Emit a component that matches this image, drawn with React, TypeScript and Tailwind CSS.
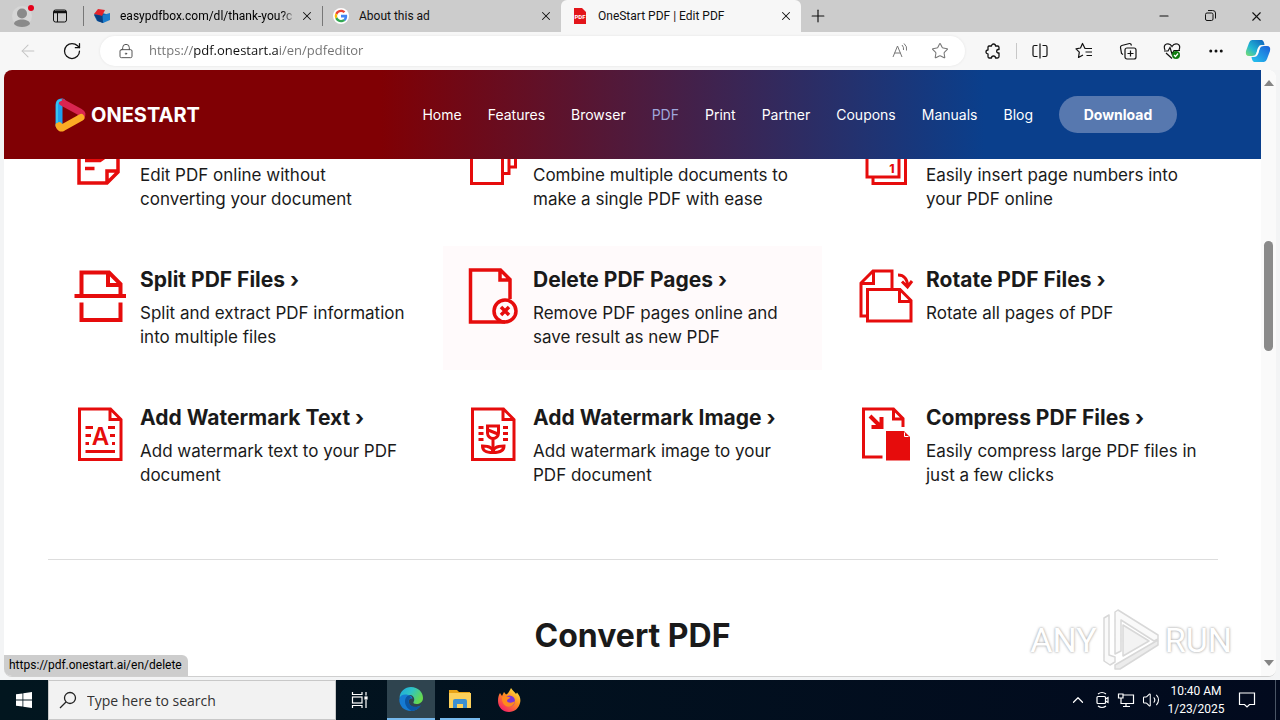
import type { ReactNode } from "react";
import {
  ArrowLeft,
  ChevronUp,
  Ellipsis,
  LockKeyhole,
  Minus,
  Plus,
  RotateCw,
  Star,
  Volume2,
  X,
} from "lucide-react";

interface Feature {
  title?: string;
  lines: string[];
  icon: ReactNode;
  active?: boolean;
}

const NAV_LINKS = ["Home", "Features", "Browser", "PDF", "Print", "Partner", "Coupons", "Manuals", "Blog"];

const FEATURES: Feature[] = [
  {
    title: "Split PDF Files ›",
    lines: ["Split and extract PDF information", "into multiple files"],
    icon: (
      <g strokeWidth="4">
        <path d="M9.5 28V4.5H37L48.5 16V28M36 4.5V17H48.5M2.5 28H54M9.5 34.5V52H48.5V34.5" />
      </g>
    ),
  },
  {
    title: "Delete PDF Pages ›",
    lines: ["Remove PDF pages online and", "save result as new PDF"],
    active: true,
    icon: (
      <g strokeWidth="3.5">
        <path d="M40 54H5.5V2H35.5L45 11.5V31M35 2V12H45" />
        <circle cx="40" cy="43" r="11" />
        <path d="M36 39L44 47M44 39L36 47" />
      </g>
    ),
  },
  {
    title: "Rotate PDF Files ›",
    lines: ["Rotate all pages of PDF"],
    icon: (
      <g strokeWidth="3">
        <path d="M9 48H3V15L15 3H34V20M15.5 3V15.5H3" />
        <path d="M9.5 21.5H42L53 32.5V53H9.5ZM41.5 21.5V33.5H53" />
        <path d="M40 7C46 7 49.5 11 49.5 18M44 13.5L49.5 19L54 13" />
      </g>
    ),
  },
  {
    title: "Add Watermark Text ›",
    lines: ["Add watermark text to your PDF", "document"],
    icon: (
      <g strokeWidth="3">
        <path d="M7.5 3H38.5L49 13.5V53.5H7.5ZM38 3V13.5H49" />
        <path d="M13.5 21.5H21M13.5 29.5H19M13.5 37.5H17M36 21.5H43M38 29.5H43M40 37.5H43M13.5 45.5H43" />
        <text x="28.5" y="39" textAnchor="middle" fontSize="24" fontWeight="600" fill="currentColor" stroke="none">
          A
        </text>
      </g>
    ),
  },
  {
    title: "Add Watermark Image ›",
    lines: ["Add watermark image to your", "PDF document"],
    icon: (
      <g strokeWidth="3">
        <path d="M7.5 3H38.5L49 13.5V53.5H7.5ZM38 3V13.5H49" />
        <path d="M13.5 21.5H18.5M13.5 27.5H18.5M13.5 33.5H18.5M38 21.5H43M38 27.5H43M38 33.5H43" />
        <path d="M22.5 20H33.5V27C33.5 30 31 32.5 28 32.5S22.5 30 22.5 27ZM23 24L33 28M28 32V46" />
        <path d="M28 46C28 42 25 40 17.5 40C17.5 44.5 20 46.5 28 46.5C36 46.5 39 44.5 39 40C31 40 28 42 28 46" />
      </g>
    ),
  },
  {
    title: "Compress PDF Files ›",
    lines: ["Easily compress large PDF files in", "just a few clicks"],
    icon: (
      <g strokeWidth="3">
        <path d="M24.5 51H5.5V3H35.5L45 12.5V21M35.5 3V13H45" />
        <path strokeWidth="4" d="M12 10L23 21M13.5 21H23.5V11" />
        <path fill="currentColor" stroke="none" d="M28 25H46L52 31V54.5H28Z" />
        <path stroke="white" strokeWidth="1" d="M46.5 26.5V30.5H50.5" />
      </g>
    ),
  },
];

// Row that is scrolled halfway beneath the sticky header
const SCROLLED_FEATURES: Feature[] = [
  {
    lines: ["Edit PDF online without", "converting your document"],
    icon: (
      <g strokeWidth="3.5">
        <path d="M7 20V53H35L46 42V20M35 53V41H46M13 30.5H28L33 27M13 38.5H22.5" />
      </g>
    ),
  },
  {
    lines: ["Combine multiple documents to", "make a single PDF with ease"],
    icon: (
      <g strokeWidth="3">
        <path d="M6.5 20V53.5H37.5V20M38 43.5H44V20M44 37H50.5V20" />
      </g>
    ),
  },
  {
    lines: ["Easily insert page numbers into", "your PDF online"],
    icon: (
      <g strokeWidth="3">
        <path d="M9 20V47H41V20M15 47V53.5H47.5V20" />
        <text x="34" y="43" textAnchor="middle" fontSize="12" fontWeight="800" fill="currentColor" stroke="none">
          1
        </text>
      </g>
    ),
  },
];

function FeatureText({ feature }: { feature: Feature }) {
  return (
    <div>
      {feature.title && (
        <h3 className="mb-[9px] text-[21px] leading-6 font-bold whitespace-nowrap">
          {feature.title}
        </h3>
      )}
      <p className="text-[17px] leading-6 whitespace-nowrap">
        {feature.lines.map((line) => (
          <span key={line} className="block">
            {line}
          </span>
        ))}
      </p>
    </div>
  );
}

function FeatureCard({ feature }: { feature: Feature }) {
  return (
    <a
      href="#feature"
      className={`mx-[7px] flex items-start gap-3 pt-[22px] pb-[21px] pl-[22px] ${
        feature.active ? "bg-[#fffafb]" : ""
      }`}
    >
      <svg viewBox="0 0 56 56" fill="none" stroke="currentColor" className="size-14 shrink-0 text-[#e60c0c]">
        {feature.icon}
      </svg>
      <FeatureText feature={feature} />
    </a>
  );
}

function ScrolledCard({ feature }: { feature: Feature }) {
  return (
    <a href="#feature" className="mx-[7px] flex items-start gap-3 pb-[21px] pl-[22px]">
      <svg viewBox="0 29 56 27" fill="none" stroke="currentColor" className="h-[27px] w-14 shrink-0 text-[#e60c0c]">
        {feature.icon}
      </svg>
      <div className="pt-1">
        <FeatureText feature={feature} />
      </div>
    </a>
  );
}

function TabBar() {
  return (
    <div className="flex h-8 shrink-0 items-center bg-[#cccccc] font-[Roboto] text-[12px]">
      <button aria-label="Profile" className="ml-3 shrink-0">
        <svg viewBox="0 0 24 24" className="size-6">
          <circle cx="10" cy="12" r="10" fill="#d6d6d6" />
          <circle cx="10" cy="9.5" r="5" fill="#8a8a8a" />
          <path d="M2 20C2 14 18 14 18 20C15 24 5 24 2 20Z" fill="#8a8a8a" />
          <circle cx="19" cy="4" r="3" fill="#e5001a" />
        </svg>
      </button>
      <button aria-label="Tab actions" className="ml-4 shrink-0">
        <svg viewBox="0 0 16 16" fill="none" stroke="#111" className="size-4">
          <rect x="1.5" y="2" width="13" height="12" rx="2" />
          <path d="M2 4H14" strokeWidth="2.5" />
          <path d="M5.5 4V14" />
        </svg>
      </button>
      <div className="ml-[15px] h-5 w-px shrink-0 bg-[#777]" />
      <div className="flex w-[238px] shrink-0 items-center pr-2 pl-[10px]">
        <svg viewBox="0 0 16 16" className="size-4 shrink-0">
          <path d="M0 7L8 5L16 7L9 15L3 13Z" fill="#0a5da8" />
          <path d="M9 7L16 5V12L9 15Z" fill="#1b7ccb" />
          <path d="M0 6L4 1L11 2L8 8Z" fill="#e5232b" />
          <path d="M0 6L8 8L9 15L4 13Z" fill="#0b3f80" />
        </svg>
        <span className="ml-[10px] flex-1 overflow-hidden bg-linear-to-r from-black from-92% to-transparent bg-clip-text whitespace-nowrap text-transparent">
          easypdfbox.com/dl/thank-you?c
        </span>
        <button aria-label="Close tab" className="ml-1">
          <X className="size-[14px]" strokeWidth={1.75} />
        </button>
      </div>
      <div className="h-5 w-px shrink-0 bg-[#777]" />
      <div className="flex w-[238px] shrink-0 items-center pr-2 pl-[10px]">
        <svg viewBox="0 0 48 48" className="size-4 shrink-0">
          <circle cx="24" cy="24" r="24" fill="white" />
          <path fill="#EA4335" d="M24 12c3.300 0 6 1.200 8 3l5-5C33.500 6.600 29 5 24 5 16.500 5 10 9.300 7 15.500l6 4.600C14.500 15.500 18.900 12 24 12z" />
          <path fill="#4285F4" d="M42.500 24.500c0-1.500-.1-2.700-.4-4H24v8h10.500c-.5 2.700-2 4.700-4 6.100l6 4.700c3.800-3.500 6-8.600 6-14.800z" />
          <path fill="#FBBC05" d="M13 28a12 12 0 0 1 0-7.900l-6-4.600a19 19 0 0 0 0 17.100z" />
          <path fill="#34A853" d="M24 43c5 0 9.500-1.600 12.500-4.500l-6-4.700c-1.700 1.200-3.900 1.900-6.500 1.900-5.100 0-9.500-3.300-11-7.800l-6 4.700C10 38.800 16.500 43 24 43z" />
        </svg>
        <span className="ml-[10px] flex-1">About this ad</span>
        <button aria-label="Close tab">
          <X className="size-[14px]" strokeWidth={1.75} />
        </button>
      </div>
      <div className="flex h-8 w-60 shrink-0 items-center rounded-t-md bg-[#f7f7f7] pr-2 pl-[11px]">
        <svg viewBox="0 0 16 16" className="size-4 shrink-0">
          <path d="M2 0H10L14 4V16H2Z" fill="#e3151a" />
          <text x="8" y="10.5" textAnchor="middle" fontSize="6" fontWeight="700" fill="white">
            PDF
          </text>
        </svg>
        <span className="ml-[10px] flex-1">OneStart PDF | Edit PDF</span>
        <button aria-label="Close tab">
          <X className="size-[14px]" strokeWidth={1.75} />
        </button>
      </div>
      <button aria-label="New tab" className="ml-[7px]">
        <Plus className="size-5" strokeWidth={1.4} />
      </button>
      <div className="mr-4 ml-auto flex items-center gap-8">
        <button aria-label="Minimize">
          <Minus className="size-[14px]" strokeWidth={1.75} />
        </button>
        <button aria-label="Restore">
          <svg viewBox="0 0 14 14" fill="none" stroke="#111" className="size-[14px]">
            <rect x="2.5" y="4" width="7.5" height="7.5" rx="1.5" />
            <path d="M5 1.500H9.500Q12.500 1.500 12.500 4V9.500" />
          </svg>
        </button>
        <button aria-label="Close window">
          <X className="size-[15px]" strokeWidth={1.75} />
        </button>
      </div>
    </div>
  );
}

function Toolbar() {
  return (
    <div className="flex h-[38px] shrink-0 items-center bg-[#f7f7f7] pr-[9px] pl-[18px]">
      <button aria-label="Back">
        <ArrowLeft className="size-5 text-[#c4c4c4]" strokeWidth={1.25} />
      </button>
      <button aria-label="Reload" className="ml-6">
        <RotateCw className="size-5" strokeWidth={1.5} />
      </button>
      <div className="ml-[18px] flex h-[30px] flex-1 items-center rounded-full bg-white pr-4 pl-[18px] shadow-[0_0_3px_rgba(0,0,0,0.08)]">
        <LockKeyhole className="size-4 text-[#555]" strokeWidth={1.5} />
        <input
          aria-label="Address"
          defaultValue="https://pdf.onestart.ai/en/pdfeditor"
          className="ml-[15px] min-w-0 flex-1 bg-linear-[90deg,#707070_45px,#111_45px,#111_130px,#707070_130px] bg-clip-text text-[13px] text-transparent outline-none"
        />
        <button aria-label="Read aloud">
          <svg viewBox="0 0 18 18" fill="none" stroke="#777" className="size-[18px]">
            <path d="M2 15L6.500 4L11 15M3.500 11H9.500M11 3Q13 5 12.500 8M13 1.500Q16.500 4.500 15.500 8.500" />
          </svg>
        </button>
        <button aria-label="Add to favorites" className="ml-[22px]">
          <Star className="size-[18px] text-[#777]" strokeWidth={1.4} />
        </button>
      </div>
      <div className="ml-[19px] flex items-center">
        <button aria-label="Extensions">
          <svg viewBox="0 0 18 18" fill="none" stroke="#111" strokeWidth="1.300" strokeLinejoin="round" className="size-[18px]">
            <path d="M5 4H7.500A2 2 0 0 1 11.500 4H13.500Q15 4 15 5.500V7.500H14A1.800 1.800 0 0 0 14 11H15V14.500Q15 16 13.500 16H11.500A2 2 0 0 0 7.500 16H5Q4 16 4 14.500V12A2 2 0 0 1 4 8V5.500Q4 4 5 4Z" />
          </svg>
        </button>
        <div className="mx-[14px] h-4 w-px bg-[#c8c8c8]" />
        <button aria-label="Split screen">
          <svg viewBox="0 0 18 18" fill="none" stroke="#111" strokeWidth="1.200" className="size-[18px]">
            <path d="M9 1.500V16.500M6.500 3.500H3.500Q2 3.500 2 5V13Q2 14.500 3.500 14.500H6.500M11.500 3.500H14.500Q16 3.500 16 5V13Q16 14.500 14.500 14.500H11.500" />
          </svg>
        </button>
        <button aria-label="Favorites" className="ml-[26px]">
          <svg viewBox="0 0 18 18" fill="none" stroke="#111" strokeWidth="1.200" strokeLinejoin="round" className="size-[18px]">
            <path d="M17 6.500H10L7.500 1.500L5.500 6L1 6.800L4.300 10.200L3.500 15.500L8 13M10.500 10H17M11.500 13.500H17" />
          </svg>
        </button>
        <button aria-label="Collections" className="ml-[26px]">
          <svg viewBox="0 0 18 18" fill="none" stroke="#111" strokeWidth="1.200" className="size-[18px]">
            <rect x="6" y="6" width="11" height="11" rx="2" />
            <path d="M11.500 8.500V14.500M8.500 11.500H14.500M4 12.500L2.500 11.500L1.500 5.500Q1.300 4 2.800 3.500L10.500 1.500Q12 1.300 12.500 3.500" />
          </svg>
        </button>
        <button aria-label="Browser essentials" className="ml-[26px]">
          <svg viewBox="0 0 18 18" fill="none" stroke="#111" strokeWidth="1.200" className="size-[18px]">
            <path d="M2 8Q0 3.500 3.500 2Q7 1 9 4.500Q11 1 14.500 2Q18 3.500 16 8M1 9H5L7 5.500L9 12L11 8.500H17M3 11L9 16.500" />
            <circle cx="13" cy="13" r="4" fill="#107c10" stroke="none" />
            <path d="M11 13L12.500 14.500L15 11.500" stroke="white" />
          </svg>
        </button>
        <button aria-label="More" className="ml-[26px]">
          <Ellipsis className="size-[18px]" />
        </button>
        <button aria-label="Copilot" className="ml-5">
          <svg viewBox="0 0 26 26" className="size-[26px]">
            <defs>
              <linearGradient id="copilotLeft" x1="0" y1="1" x2="1" y2="0">
                <stop offset="0" stopColor="#7ee06a" />
                <stop offset="0.400" stopColor="#21b6d4" />
                <stop offset="1" stopColor="#0f5fbd" />
              </linearGradient>
              <linearGradient id="copilotRight" x1="0" y1="1" x2="1" y2="0">
                <stop offset="0" stopColor="#26c6ee" />
                <stop offset="1" stopColor="#1b5fd9" />
              </linearGradient>
            </defs>
            <path d="M7 2H17Q19 3 19.500 7H16Q14 7 13 10L11 16Q10 18 7 18H4Q0 18 1 13L4 5Q5 2 7 2Z" fill="url(#copilotLeft)" />
            <path d="M19 24H9Q7 23 6.500 19H9Q12 19 13 16L15 10Q16 8 19 8H22Q26 8 25 13L22 21Q21 24 19 24Z" fill="url(#copilotRight)" />
            <path d="M13 10L11 17L13 16L15 9Z" fill="#fff" />
          </svg>
        </button>
      </div>
    </div>
  );
}

function SiteHeader() {
  return (
    <header className="flex h-[89px] items-center bg-linear-to-r/srgb from-[#800004] from-30% to-[#0a3f8c] to-78% pr-[84px] pl-[50px] text-white">
      <a href="#home" className="flex items-center gap-1">
        <svg viewBox="0 0 33 36" fill="none" strokeWidth="7" strokeLinecap="round" strokeLinejoin="round" className="h-9 w-[33px]">
          <path d="M5 28V8Q5 4.500 8 5" stroke="#1fa0ee" />
          <path d="M8.500 5.500L26 15Q29.500 17 27 19.500" stroke="#d92550" />
          <path d="M27 20.500L9 30.500Q6 32 5 28.500" stroke="#fbab24" />
          <path d="M3 25V8Q3 4 7 3" stroke="#35c4f0" strokeWidth="2" />
        </svg>
        <span className="font-[Inter] text-[20px] leading-6 font-bold">ONESTART</span>
      </a>
      <nav className="ml-auto flex items-center gap-[26px] text-[14px]">
        {NAV_LINKS.map((link) => (
          <a key={link} href={`#${link}`} className={link === "PDF" ? "text-[#9fa6dc]" : ""}>
            {link}
          </a>
        ))}
        <button className="h-[37px] w-[118px] rounded-full bg-[#5778af] text-[14px] font-bold">Download</button>
      </nav>
    </header>
  );
}

function Watermark() {
  return (
    <div className="absolute right-11 bottom-1 flex items-center gap-1 font-[Roboto] text-[34px] leading-[64px] text-white [text-shadow:0_0_3px_#aaa,0_0_2px_#ccc]">
      <span>ANY</span>
      <svg viewBox="0 0 60 64" fill="#fafafa" stroke="#d8d8d8" strokeWidth="1.500" strokeLinejoin="round" className="h-16 w-[60px]">
        <path d="M3 10L8 7V47L14 49V54L9 57L3 53Z" />
        <path d="M14 4L17 2L57 27V31L53 33L20 12V43L14 46Z" />
        <path d="M14 57L57 32V37L19 61H14Z" fill="#ececec" />
        <path d="M22 17L48 33L22 48Z" fill="#f3f3f3" />
      </svg>
      <span>RUN</span>
    </div>
  );
}

function Page() {
  return (
    <div className="relative mx-1 flex min-h-0 flex-1 overflow-hidden rounded-lg border-b border-[#cfcfcf] bg-white">
      <div className="min-w-0 flex-1 font-[Inter] text-[#1a1a1a]">
        <SiteHeader />
        <main>
          <div className="mx-auto grid max-w-[1179px] grid-cols-3 gap-y-[14px]">
            {SCROLLED_FEATURES.map((feature) => (
              <ScrolledCard key={feature.lines[0]} feature={feature} />
            ))}
            {FEATURES.map((feature) => (
              <FeatureCard key={feature.title} feature={feature} />
            ))}
          </div>
          <hr className="mx-auto mt-[51px] max-w-[1170px] border-[#dddddd]" />
          <h2 className="mt-14 text-center text-[32px] leading-10 font-bold">Convert PDF</h2>
        </main>
      </div>
      <div className="flex w-[15px] shrink-0 flex-col items-center bg-[#fafafa] py-[10px]">
        <svg viewBox="0 0 10 6" className="h-[6px] w-[10px]">
          <path d="M0 6L5 0L10 6Z" fill="#858585" />
        </svg>
        <div className="mt-[155px] h-[110px] w-[9px] rounded-full bg-[#8a8a8a]" />
        <svg viewBox="0 0 10 6" className="mt-auto h-[6px] w-[10px]">
          <path d="M0 0L5 6L10 0Z" fill="#858585" />
        </svg>
      </div>
      <Watermark />
      <div className="absolute bottom-0 left-0 h-[21px] rounded-tr-md bg-[#cdcdcd] pr-[6px] pl-[5px] font-[Roboto] text-[12px] leading-[20px] text-black">
        https://pdf.onestart.ai/en/delete
      </div>
    </div>
  );
}

function Taskbar() {
  return (
    <div className="flex h-10 shrink-0 bg-linear-to-r from-[#02161f] to-[#020a1e] text-white">
      <button aria-label="Start" className="flex w-12 items-center justify-center">
        <svg viewBox="0 0 16 16" fill="white" className="size-4">
          <path d="M0 2.300L6.500 1.400V7.600H0ZM7.300 1.300L16 0V7.600H7.300ZM0 8.400H6.500V14.600L0 13.700ZM7.300 8.400H16V16L7.300 14.700Z" />
        </svg>
      </button>
      <label className="flex w-72 items-center border border-[#c8c8c8] bg-[#f2f2f2] pl-[10px]">
        <svg viewBox="0 0 18 18" fill="none" stroke="#222" strokeWidth="1.300" className="size-[18px] shrink-0">
          <circle cx="11" cy="7" r="5.500" />
          <path d="M7 11L1 17" />
        </svg>
        <input
          aria-label="Search"
          placeholder="Type here to search"
          className="ml-[10px] min-w-0 flex-1 text-[14px] outline-none placeholder:text-[#333]"
        />
      </label>
      <button aria-label="Task view" className="mr-[3px] flex w-12 items-center justify-center">
        <svg viewBox="0 0 18 18" fill="none" stroke="white" strokeWidth="1.200" className="size-[18px]">
          <path d="M1.500 1V3.500H11V1M1.500 17V14.500H11V17M15 1V4.500M15 9V17" />
          <rect x="1.500" y="6" width="9.500" height="6" />
          <rect x="14" y="6" width="2" height="2" fill="white" />
        </svg>
      </button>
      <button aria-label="Microsoft Edge" className="flex w-12 items-center justify-center border-b-2 border-[#76b9ed] bg-[#2f444f]">
        <svg viewBox="0 0 24 24" className="size-6">
          <defs>
            <linearGradient id="edgeTop" x1="0" y1="0" x2="1" y2="0.500">
              <stop offset="0" stopColor="#1ba7e0" />
              <stop offset="0.500" stopColor="#2fc3c5" />
              <stop offset="1" stopColor="#66d94e" />
            </linearGradient>
          </defs>
          <path d="M0.500 11C1 4 6 0 12 0C19 0 24 5 24 11C24 15 20.500 17 17.500 17C15 17 14 16 14.500 15C16 13 15.500 8.500 11 8C6 7.500 1.500 9 0.500 11Z" fill="url(#edgeTop)" />
          <path d="M0.300 12C1 8 5 7 8.500 7.800C12 8.500 13.500 10 13.500 12C11.500 10.500 9 13 10 16C11 20 16 22 21.500 18.500C19 22.500 15.500 24 12 24C5 24 0 19 0.300 12Z" fill="#167bd2" />
          <path d="M8.500 9C4.500 12 5 20 12.500 24C17 24 20 21.500 22 18.300C17 21 11.500 20 10 16C9 13.500 10 11.500 12 10.500C11 9 10 8.500 8.500 9Z" fill="#0c56a3" />
        </svg>
      </button>
      <button aria-label="File Explorer" className="mx-[5px] flex w-10 items-center justify-center border-b-2 border-[#76b9ed]">
        <svg viewBox="0 0 22 20" className="h-5 w-[22px]">
          <path d="M0 1H8L10 3H21V8H0Z" fill="#e8a317" />
          <path d="M0 4H22V19H0Z" fill="#fcd05b" />
          <path d="M4 12Q4 10 6 10H16Q18 10 18 12V19H14V15H8V19H4Z" fill="#3c8fd0" />
        </svg>
      </button>
      <button aria-label="Firefox" className="flex w-12 items-center justify-center">
        <svg viewBox="0 0 24 24" className="size-6">
          <defs>
            <linearGradient id="foxFlame" x1="0.900" y1="0" x2="0.200" y2="1">
              <stop offset="0" stopColor="#fff04a" />
              <stop offset="0.450" stopColor="#ff9220" />
              <stop offset="1" stopColor="#f4176b" />
            </linearGradient>
          </defs>
          <path d="M3 5L5 8L7 4L9 6.500C11 6 12 4 14 0C16 3 18 4 19 6L20 4.500C23 8 24 11 23 15C22 20 17.500 24 12 24C6 24 1 19.500 1 13C1 10 1.500 7 3 5Z" fill="url(#foxFlame)" />
          <circle cx="12.500" cy="13" r="5.500" fill="#7b35d8" />
          <path d="M5 9C8 7.500 11 8 13.500 10C12 10.500 10 11 10 13C11 15 15 15.500 18 13C17 18 13 19.500 10 18.500C6.500 17.500 4.500 13 5 9Z" fill="#ff8a1c" />
        </svg>
      </button>
      <div className="mr-1 ml-auto flex items-center gap-[7px]">
        <button aria-label="Show hidden icons">
          <ChevronUp className="size-[18px]" strokeWidth={1.6} />
        </button>
        <svg viewBox="0 0 16 18" fill="none" stroke="white" strokeWidth="1.200" className="h-[18px] w-4">
          <path d="M4 3Q8 0 12 3M4 15Q8 18 12 15M11.500 8L14 6.500V11.500L11.500 10" />
          <rect x="3" y="5.500" width="8.500" height="7" rx="1" />
        </svg>
        <svg viewBox="0 0 18 16" fill="none" stroke="white" strokeWidth="1.200" className="h-4 w-[18px]">
          <path d="M6 3H16.500V11.500H4V7M9 11.500V14.500M6 14.500H13M1.500 2H6V6H1.500ZM4 6V8" />
        </svg>
        <Volume2 className="size-[18px]" strokeWidth={1.4} />
        <div className="w-[58px] text-center font-[Roboto] text-[12px] leading-[18px] whitespace-nowrap">
          <div>10:40 AM</div>
          <div>1/23/2025</div>
        </div>
        <button aria-label="Notifications" className="ml-[6px]">
          <svg viewBox="0 0 18 18" fill="none" stroke="white" strokeWidth="1.200" className="size-[18px]">
            <path d="M1.500 2H16.500V13.500H11.500L9 16L6.500 13.500H1.500Z" />
          </svg>
        </button>
        <div className="ml-3 h-10 w-px bg-[#4a5565]" />
      </div>
    </div>
  );
}

export default function App() {
  return (
    <div className="flex h-screen flex-col overflow-hidden bg-[#f3f4f5] font-['Open_Sans','Noto_Sans',sans-serif] text-[#111]">
      <TabBar />
      <Toolbar />
      <Page />
      <div className="h-[3px] shrink-0" />
      <Taskbar />
    </div>
  );
}
